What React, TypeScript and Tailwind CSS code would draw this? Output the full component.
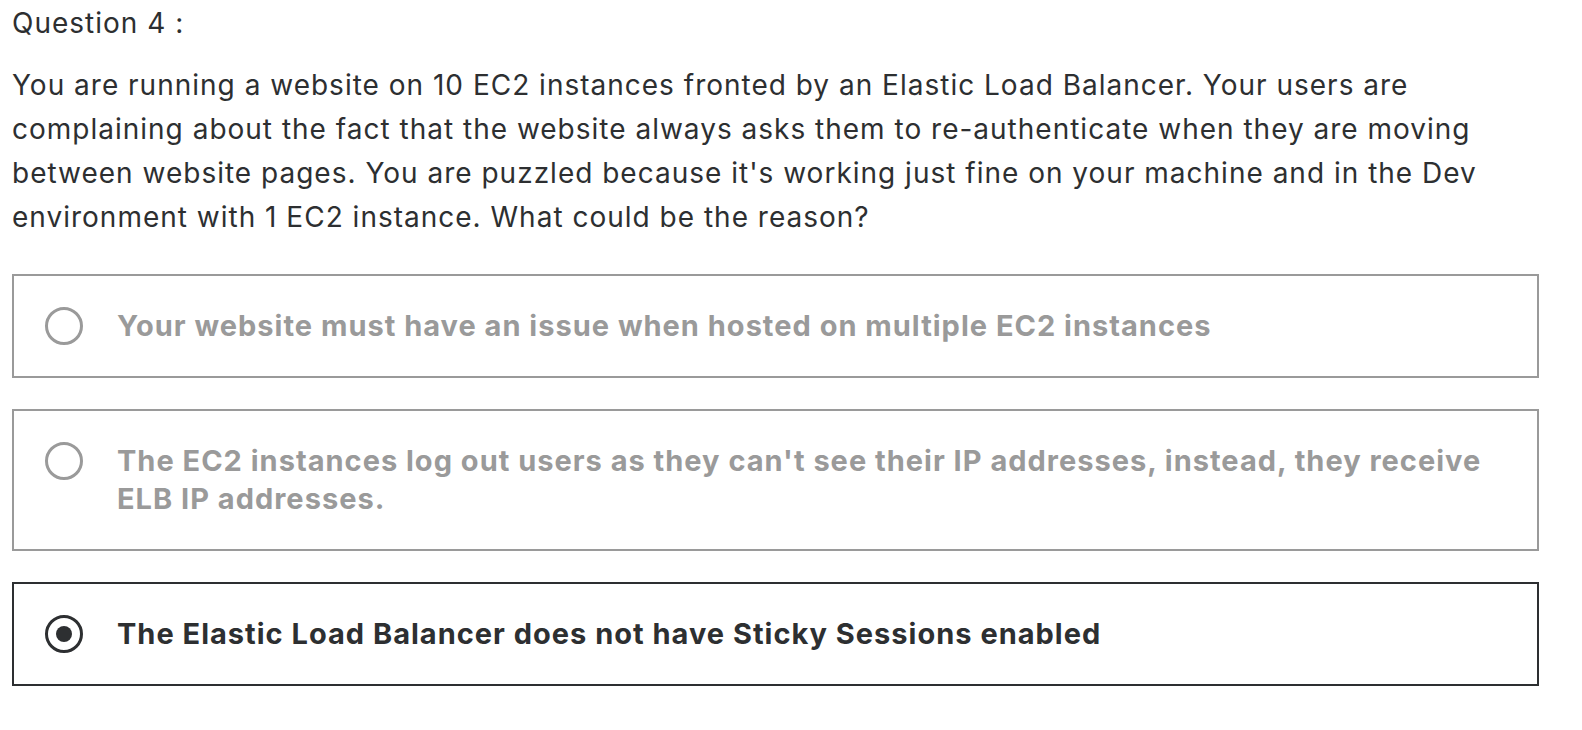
const options = [
  { text: "Your website must have an issue when hosted on multiple EC2 instances", selected: false },
  {
    text: "The EC2 instances log out users as they can't see their IP addresses, instead, they receive ELB IP addresses.",
    selected: false,
  },
  { text: "The Elastic Load Balancer does not have Sticky Sessions enabled", selected: true },
];

const Radio = ({ selected }: { selected: boolean }) => (
  <span
    className={`flex h-[38px] w-[38px] shrink-0 items-center justify-center rounded-full border-[3px] ${
      selected ? "border-[#2d2f31]" : "border-[#9a9a9a]"
    }`}
  >
    {selected && <span className="h-[16px] w-[16px] rounded-full bg-[#2d2f31]" />}
  </span>
);

export default function App() {
  return (
    <div className="min-h-screen bg-white font-['Inter','Liberation_Sans',sans-serif] text-[#2d2f31]">
      <div className="w-[1539px] pl-[12px] pt-px">
        <p className="text-[28px] leading-[44px] tracking-[1px]">Question 4 :</p>
        <p className="mt-[18px] pr-[47px] text-[28px] leading-[44px] tracking-[1px]">
          You are running a website on 10 EC2 instances fronted by an Elastic Load Balancer. Your users are
          complaining about the fact that the website always asks them to re-authenticate when they are moving
          between website pages. You are puzzled because it's working just fine on your machine and in the Dev
          environment with 1 EC2 instance. What could be the reason?
        </p>
        <div className="mt-[35px] flex flex-col gap-[31px]">
          {options.map((o) => (
            <div
              key={o.text}
              className={`flex items-start gap-[34px] border-2 py-[31px] pl-[31px] pr-[40px] ${
                o.selected ? "border-[#2d2f31]" : "border-[#9a9a9a]"
              }`}
            >
              <Radio selected={o.selected} />
              <span
                className={`text-[29px] font-bold leading-[38px] tracking-[1px] ${
                  o.selected ? "text-[#2d2f31]" : "text-[#9a9a9a]"
                }`}
              >
                {o.text}
              </span>
            </div>
          ))}
        </div>
      </div>
    </div>
  );
}
